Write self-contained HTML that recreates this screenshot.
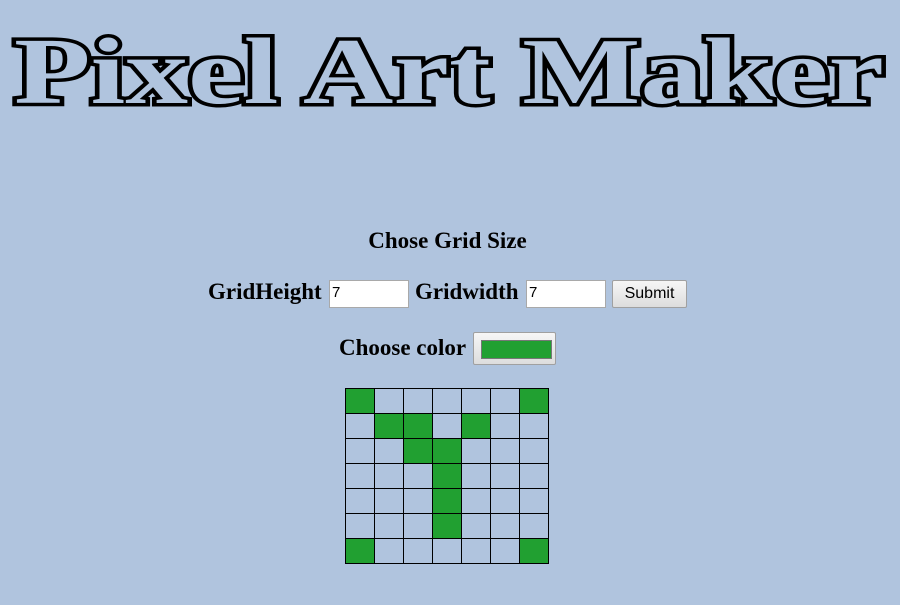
<!DOCTYPE html>
<html><head><meta charset="utf-8"><style>
html,body{margin:0;padding:0;width:900px;height:605px;background:#b0c4de;overflow:hidden;font-family:"Liberation Serif",serif;}
.a{position:absolute;}
.lbl{font-weight:bold;font-size:23px;color:#000;white-space:nowrap;}
.inp{background:#fff;border:1px solid #a9a9a9;box-sizing:border-box;font-family:"Liberation Sans",sans-serif;font-size:15px;padding:3px 2px;}
.btn{background:linear-gradient(#f6f6f6,#dddddd);border:1px solid #a0a0a0;border-radius:2px;box-sizing:border-box;font-family:"Liberation Sans",sans-serif;font-size:16px;text-align:center;line-height:25px;}
table{border-collapse:collapse;}
td{border:1px solid #000;width:28px;height:24px;padding:0;}
td.g{background:#21a031;}
</style></head><body>
<svg class="a" style="left:0;top:0" width="900" height="130">
<text x="14" y="103" textLength="870" lengthAdjust="spacingAndGlyphs" font-family="Liberation Serif" font-weight="bold" font-size="94" fill="#000" stroke="#000" stroke-width="7" stroke-linejoin="miter">Pixel Art Maker</text>
<text x="14" y="103" textLength="870" lengthAdjust="spacingAndGlyphs" font-family="Liberation Serif" font-weight="bold" font-size="94" fill="#b0c4de">Pixel Art Maker</text>
</svg>
<div class="a lbl" style="left:0;width:895px;text-align:center;top:228px">Chose Grid Size</div>
<div class="a lbl" style="left:208px;top:279px">GridHeight</div>
<div class="a inp" style="left:329px;top:280px;width:80px;height:28px">7</div>
<div class="a lbl" style="left:415px;top:279px">Gridwidth</div>
<div class="a inp" style="left:526px;top:280px;width:80px;height:28px">7</div>
<div class="a btn" style="left:612px;top:280px;width:75px;height:28px">Submit</div>
<div class="a lbl" style="left:339px;top:335px">Choose color</div>
<div class="a btn" style="left:473px;top:332px;width:83px;height:33px"><div style="position:absolute;left:7px;top:7px;width:69px;height:17px;background:#21a031;border:1px solid #777"></div></div>
<table class="a" style="left:345px;top:388px">
<tr><td class="g"></td><td></td><td></td><td></td><td></td><td></td><td class="g"></td></tr>
<tr><td></td><td class="g"></td><td class="g"></td><td></td><td class="g"></td><td></td><td></td></tr>
<tr><td></td><td></td><td class="g"></td><td class="g"></td><td></td><td></td><td></td></tr>
<tr><td></td><td></td><td></td><td class="g"></td><td></td><td></td><td></td></tr>
<tr><td></td><td></td><td></td><td class="g"></td><td></td><td></td><td></td></tr>
<tr><td></td><td></td><td></td><td class="g"></td><td></td><td></td><td></td></tr>
<tr><td class="g"></td><td></td><td></td><td></td><td></td><td></td><td class="g"></td></tr>
</table>
</body></html>
